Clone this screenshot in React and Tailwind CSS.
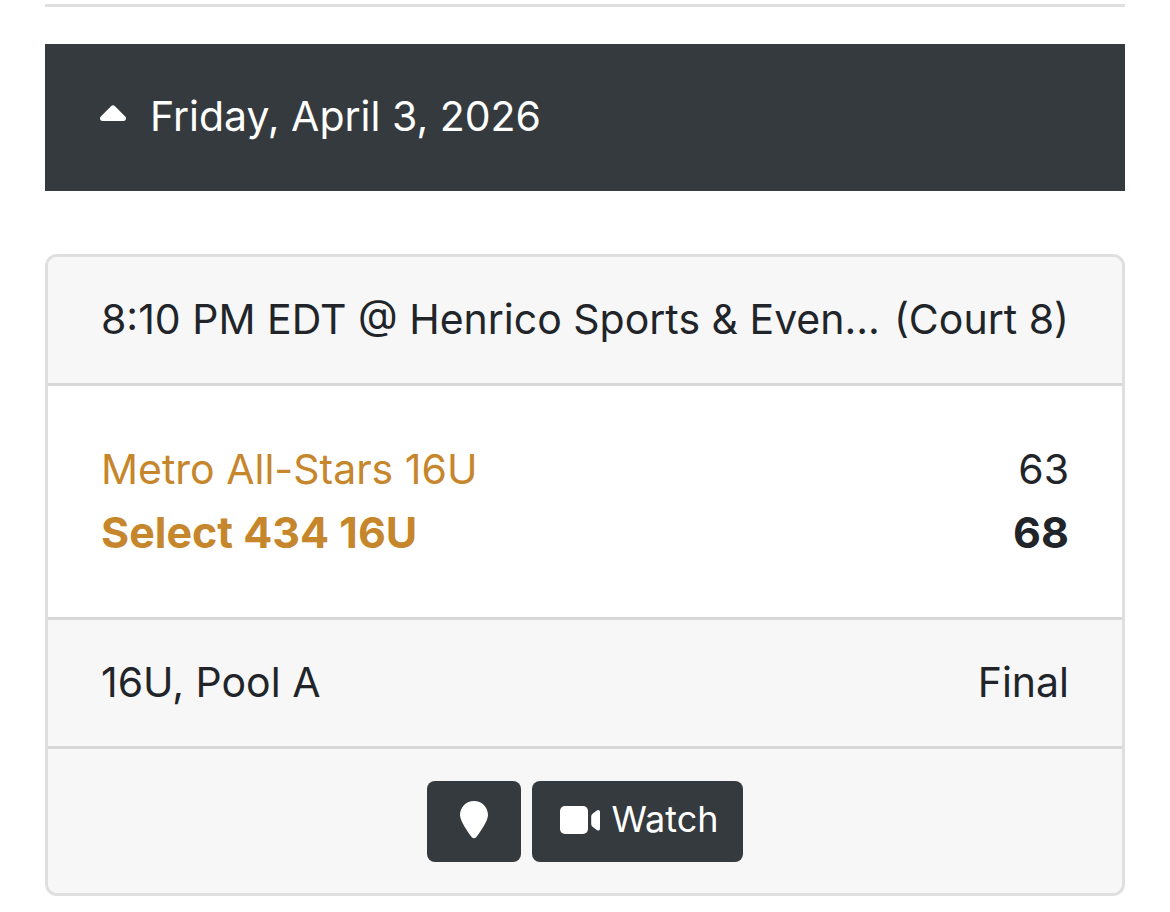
const games = [
  {
    id: 1,
    time: "8:10 PM EDT",
    venue: "Henrico Sports & Even...",
    court: "Court 8",
    teams: [
      { name: "Metro All-Stars 16U", score: 63 },
      { name: "Select 434 16U", score: 68 },
    ],
    pool: "16U, Pool A",
    status: "Final",
  },
];

function CaretUp() {
  return (
    <svg viewBox="0 0 26 16" className="w-[26px] h-4 mb-2" fill="currentColor" aria-hidden="true">
      <path d="M2.500 16C.3 16-.9 13.300.8 11.600L11 1.200Q13-.8 15 1.200L25.200 11.600C26.900 13.300 25.700 16 23.500 16Z" />
    </svg>
  );
}

function Pin() {
  return (
    <svg viewBox="0 0 28 38" className="w-7 h-[38px]" fill="currentColor" aria-hidden="true">
      <path d="M14 0C6.200 0 0 6.200 0 14c0 6.400 8.300 17.600 11.800 22.200 1.100 1.500 3.300 1.500 4.400 0C19.700 31.600 28 20.400 28 14 28 6.200 21.800 0 14 0Z" />
    </svg>
  );
}

function VideoCamera() {
  return (
    <svg viewBox="0 0 40 28" className="w-10 h-7" fill="currentColor" aria-hidden="true">
      <rect width="28" height="28" rx="5" />
      <path d="M31.200 10.500Q31.200 8.800 32.500 7.800L36.800 4.500C38.300 3.300 40 4.200 40 6V22.500C40 24.400 38.300 25.200 36.800 24L32.500 20.700Q31.200 19.700 31.200 18Z" />
    </svg>
  );
}

function Game({ game }) {
  const best = Math.max(...game.teams.map((t) => t.score));
  return (
    <article className="rounded-xl border-3 border-[#dfdfdf] overflow-hidden bg-white">
      <div className="flex justify-between gap-x-3 bg-[#f7f7f7] border-b-3 border-[#d8d8d8] px-[53px] pt-[31px] pb-8">
        <span>{game.time} @ {game.venue}</span>
        <span className="shrink-0">({game.court})</span>
      </div>
      <div className="px-[53px] pt-[52px] pb-[53px]">
        {game.teams.map((t) => (
          <div key={t.name} className={"flex justify-between " + (t.score === best ? "font-bold text-[43px] leading-[63px]" : "")}>
            <a href="#" className="text-[#c6862c]">{t.name}</a>
            <span>{t.score}</span>
          </div>
        ))}
      </div>
      <div className="flex justify-between bg-[#f7f7f7] border-t-3 border-[#d8d8d8] px-[53px] pt-[31px] pb-8">
        <span>{game.pool}</span>
        <span>{game.status}</span>
      </div>
      <div className="flex justify-center gap-[11px] bg-[#f7f7f7] border-t-3 border-[#d8d8d8] pt-8 pb-[31px]">
        <button type="button" aria-label="Location" className="flex items-center justify-center w-[94px] h-[81px] pb-1 rounded-lg bg-[#353a3e] text-white">
          <Pin />
        </button>
        <button type="button" className="flex items-center gap-[11px] h-[81px] pl-7 pr-6 pb-1 rounded-lg bg-[#353a3e] text-white text-[36px]">
          <VideoCamera />
          Watch
        </button>
      </div>
    </article>
  );
}

export default function App() {
  return (
    <main className="px-[45px] pt-1 pb-4 bg-white text-[#212529] font-[Inter,sans-serif] text-[41px] leading-[63px]">
      <hr className="border-0 border-t-3 border-[#dfdfdf]" />
      <h2 className="mt-[37px] bg-[#353a3e] text-white">
        <button type="button" aria-expanded="true" className="flex items-center gap-6 w-full px-[55px] pt-[41px] pb-[43px] text-left">
          <CaretUp />
          Friday, April 3, 2026
        </button>
      </h2>
      <section className="mt-[63px]">
        {games.map((g) => (
          <Game key={g.id} game={g} />
        ))}
      </section>
    </main>
  );
}
